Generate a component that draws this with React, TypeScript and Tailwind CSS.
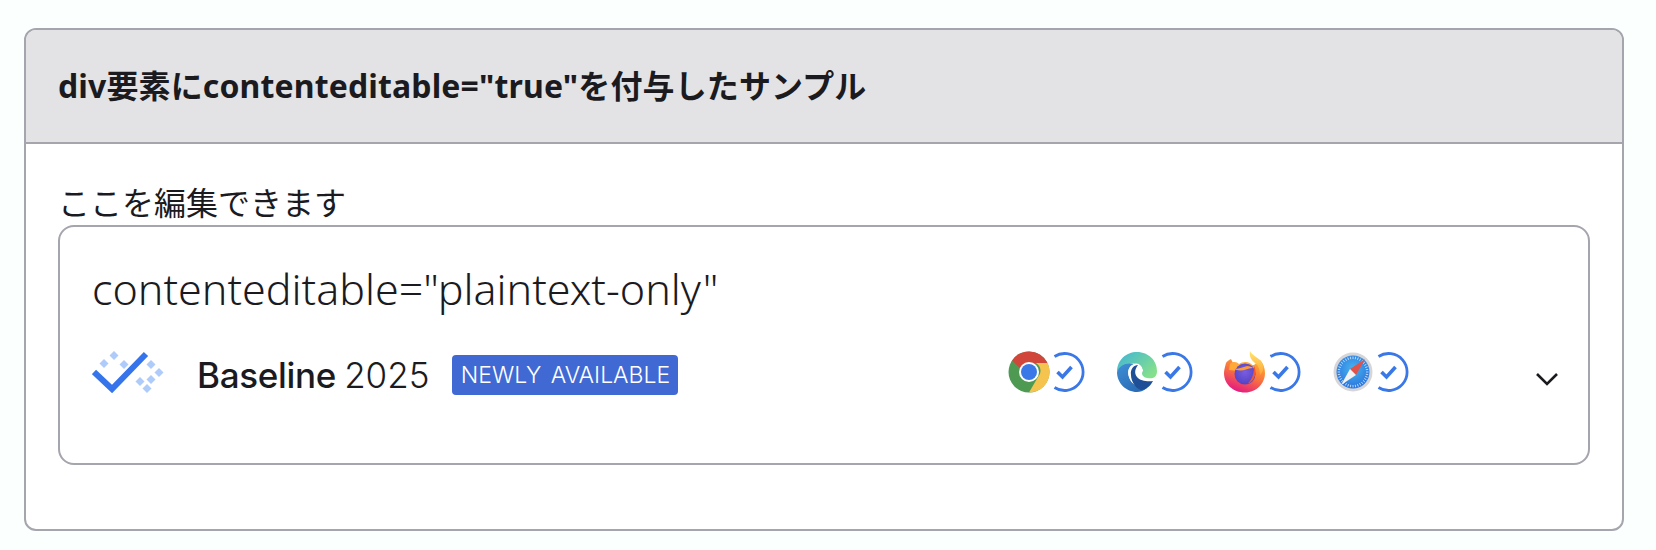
const CheckCircle = () => (
  <svg width="40" height="42" viewBox="0 0 40 42" className="ml-[1px]" fill="none">
    <path d="M3.5 5.5 A18.5 18.5 0 1 1 3.5 36.5" stroke="#3b78e7" strokeWidth="2.8" />
    <path d="M6.5 21 L11.5 26 L20.5 16" stroke="#3b78e7" strokeWidth="3.6" />
  </svg>
);

const BaselineLogo = () => (
  <svg width="72" height="42" viewBox="0 0 72 42" className="shrink-0 -mt-[6px]">
    <path d="M2 21 L20 38 L54 3" fill="none" stroke="#3574ea" strokeWidth="6" />
    <g fill="#aecbfa">
      <path d="M22 0 l4.500 4.500 -4.500 4.500 -4.500 -4.500z" />
      <path d="M12 8 l4.500 4.500 -4.500 4.500 -4.500 -4.500z" />
      <path d="M32 9 l4.500 4.500 -4.500 4.500 -4.500 -4.500z" />
      <path d="M59 9 l4.500 4.500 -4.500 4.500 -4.500 -4.500z" />
      <path d="M67 17 l4.500 4.500 -4.500 4.500 -4.500 -4.500z" />
      <path d="M59 24 l4.500 4.500 -4.500 4.500 -4.500 -4.500z" />
      <path d="M48 26 l4.500 4.500 -4.500 4.500 -4.500 -4.500z" />
      <path d="M55 33 l4.500 4.500 -4.500 4.500 -4.500 -4.500z" />
    </g>
  </svg>
);

const Chrome = () => (
  <svg width="42" height="42" viewBox="0 0 42 42" className="shrink-0">
    <circle cx="21" cy="21" r="20.5" fill="#4f9a53" />
    <path d="M21 .5 A20.5 20.5 0 0 1 39.5 12 L21 12 A9 9 0 0 0 12.6 17.8 L4.2 9.4 A20.5 20.5 0 0 1 21 .5z" fill="#d1463a" />
    <path d="M39.5 12 A20.5 20.5 0 0 1 21 41.5 L30 26 A9 9 0 0 0 28 12z" fill="#f4c44f" />
    <circle cx="21" cy="21" r="10" fill="#fff" />
    <circle cx="21" cy="21" r="8" fill="#3b78e7" />
  </svg>
);

const Edge = () => (
  <svg width="42" height="42" viewBox="0 0 42 42" className="shrink-0">
    <defs>
      <linearGradient id="edgeTop" x1="0" y1="0" x2="1" y2="0.7">
        <stop offset="0" stopColor="#3fb5d8" />
        <stop offset="1" stopColor="#86e08a" />
      </linearGradient>
      <linearGradient id="edgeBlue" x1="0" y1="0" x2="0.6" y2="1">
        <stop offset="0" stopColor="#3f8fd6" />
        <stop offset="1" stopColor="#2a6cb5" />
      </linearGradient>
    </defs>
    <path d="M1 21 C1 9 10 1 21 1 C33 1 41 10 41 20 C41 27 36 28 31 27 C26 26 25 22 27 20 C26 14 20 11 13 13 C7 15 2 18 1 21z" fill="url(#edgeTop)" />
    <path d="M1 21 C3 14 11 11 18 13 C13 15 11 20 13 26 C15 33 23 38 31 37 C27 40 24 41 21 41 C10 41 1 32 1 21z" fill="url(#edgeBlue)" />
    <path d="M18 13 C22 11 26 14 27 20 C24 20 23 23 25 26 C27 29 32 29 37 30 C35 33 33 36 31 37 C23 38 15 33 13 26 C11 20 13 15 18 13z" fill="#fff" />
    <path d="M15 24 C14 18 18 14 22 14 C19 18 18 22 21 26 C24 30 32 31 37 30 C34 36 29 39 25 39 C19 37 15 30 15 24z" fill="#1f4f96" />
  </svg>
);

const Firefox = () => (
  <svg width="42" height="42" viewBox="0 0 42 42" className="shrink-0">
    <defs>
      <linearGradient id="foxBody" x1="0.8" y1="0" x2="0.3" y2="1">
        <stop offset="0" stopColor="#ffb52e" />
        <stop offset="0.5" stopColor="#f9703e" />
        <stop offset="1" stopColor="#e31587" />
      </linearGradient>
      <linearGradient id="foxTop" x1="0.5" y1="0" x2="0.5" y2="1">
        <stop offset="0" stopColor="#ffe56a" />
        <stop offset="1" stopColor="#ffa436" />
      </linearGradient>
      <radialGradient id="foxGlobe" cx="0.5" cy="0.4" r="0.7">
        <stop offset="0" stopColor="#7b5ce0" />
        <stop offset="1" stopColor="#4a3fc0" />
      </radialGradient>
    </defs>
    <path d="M2 12 C1 16 0 19 0 22 C0 33 9 41.500 21 41.500 C33 41.500 41 32 41 22 C41 17 39 12 36 9 L30 14 L10 14 L7 8 C5 9 3 10 2 12z" fill="url(#foxBody)" />
    <path d="M26 0 C25 5 27 9 31 12 C35 15 36 20 36 24 C40 20 41 14 36 9 C33 6 28 4 26 0z" fill="url(#foxTop)" />
    <path d="M6 13 C9 10 13 11 15 13 C19 10 26 10 29 15 C27 14 24 14 22 15 L14 20 L5 19z" fill="#ffa938" />
    <circle cx="21" cy="23" r="10.500" fill="url(#foxGlobe)" />
    <path d="M10 17 C14 19 19 16 23 15 C26 15 28 16 29 17 C26 17 24 18 22 18.500 C18 20 12 20 10 17z" fill="#ff9a35" />
    <path d="M30 15 C33 20 32 30 23 33 C28 29 30 23 30 15z" fill="#f2572f" />
  </svg>
);

const safariTicks = Array.from({ length: 36 }, (_, i) => i * 10);

const Safari = () => (
  <svg width="40" height="40" viewBox="0 0 40 40" className="shrink-0 mx-[1px]">
    <defs>
      <radialGradient id="safariFace" cx="0.5" cy="0.4" r="0.6">
        <stop offset="0" stopColor="#47b4ee" />
        <stop offset="1" stopColor="#2b73dd" />
      </radialGradient>
    </defs>
    <circle cx="20" cy="20" r="19.500" fill="#d6d6d8" />
    <circle cx="20" cy="20" r="16.500" fill="url(#safariFace)" />
    {safariTicks.map((deg) => (
      <line key={deg} x1="20" y1="4.500" x2="20" y2="7" stroke="#d5e8fb" strokeWidth="0.8" transform={`rotate(${deg} 20 20)`} />
    ))}
    <path d="M32 7 L17 17 L23 23z" fill="#e0524a" />
    <path d="M8 33 L17 17 L23 23z" fill="#f2f2f2" />
  </svg>
);

const browsers = [Chrome, Edge, Firefox, Safari];

export default function App() {
  return (
    <div className="min-h-screen bg-[#fbfffe] pt-[28px] px-[24px] text-[#1b1b1f] [font-family:'Noto_Sans','Noto_Sans_CJK_JP',sans-serif]">
      <div className="h-[503px] w-[1600px] overflow-hidden rounded-[12px] border-2 border-[#a5a5ae] bg-white">
        <div className="flex h-[114px] items-center border-b-2 border-[#a5a5ae] bg-[#e3e3e6] pl-[32px] text-[32px] font-bold tracking-[0.13px]">
          div要素にcontenteditable="true"を付与したサンプル
        </div>
        <div className="px-[32px] pt-[37px]">
          <div className="h-[44px] text-[32px] leading-[44px]">ここを編集できます</div>
          <div className="flex h-[240px] w-[1532px] flex-col rounded-[16px] border-2 border-[#a5a5ae] px-[32px] pt-[30px]">
            <div className="text-[43px] font-light leading-[64px]">contenteditable="plaintext-only"</div>
            <div className="mt-[32px] flex h-[44px] items-center">
              <BaselineLogo />
              <div className="ml-[33px] flex items-baseline gap-[8px] text-[35px] [font-family:Inter,sans-serif]">
                <span className="font-medium tracking-[-0.3px]">Baseline</span>
                <span className="font-light">2025</span>
              </div>
              <span className="ml-[23px] flex h-[40px] w-[226px] items-center justify-center rounded-[4px] bg-[#4169d4] text-[23px] font-light text-white [word-spacing:3px] [font-family:Inter,sans-serif]">
                NEWLY AVAILABLE
              </span>
              <div className="ml-[330px] -mt-[6px] flex gap-[25px]">
                {browsers.map((Icon, i) => (
                  <div key={i} className="flex items-center">
                    <Icon />
                    <CheckCircle />
                  </div>
                ))}
              </div>
              <svg width="24" height="14" viewBox="0 0 24 14" className="ml-auto mt-[8px] mr-[-3px]" fill="none">
                <path d="M2 2 L12 12 L22 2" stroke="#1b1b1f" strokeWidth="2.6" />
              </svg>
            </div>
          </div>
        </div>
      </div>
    </div>
  );
}
